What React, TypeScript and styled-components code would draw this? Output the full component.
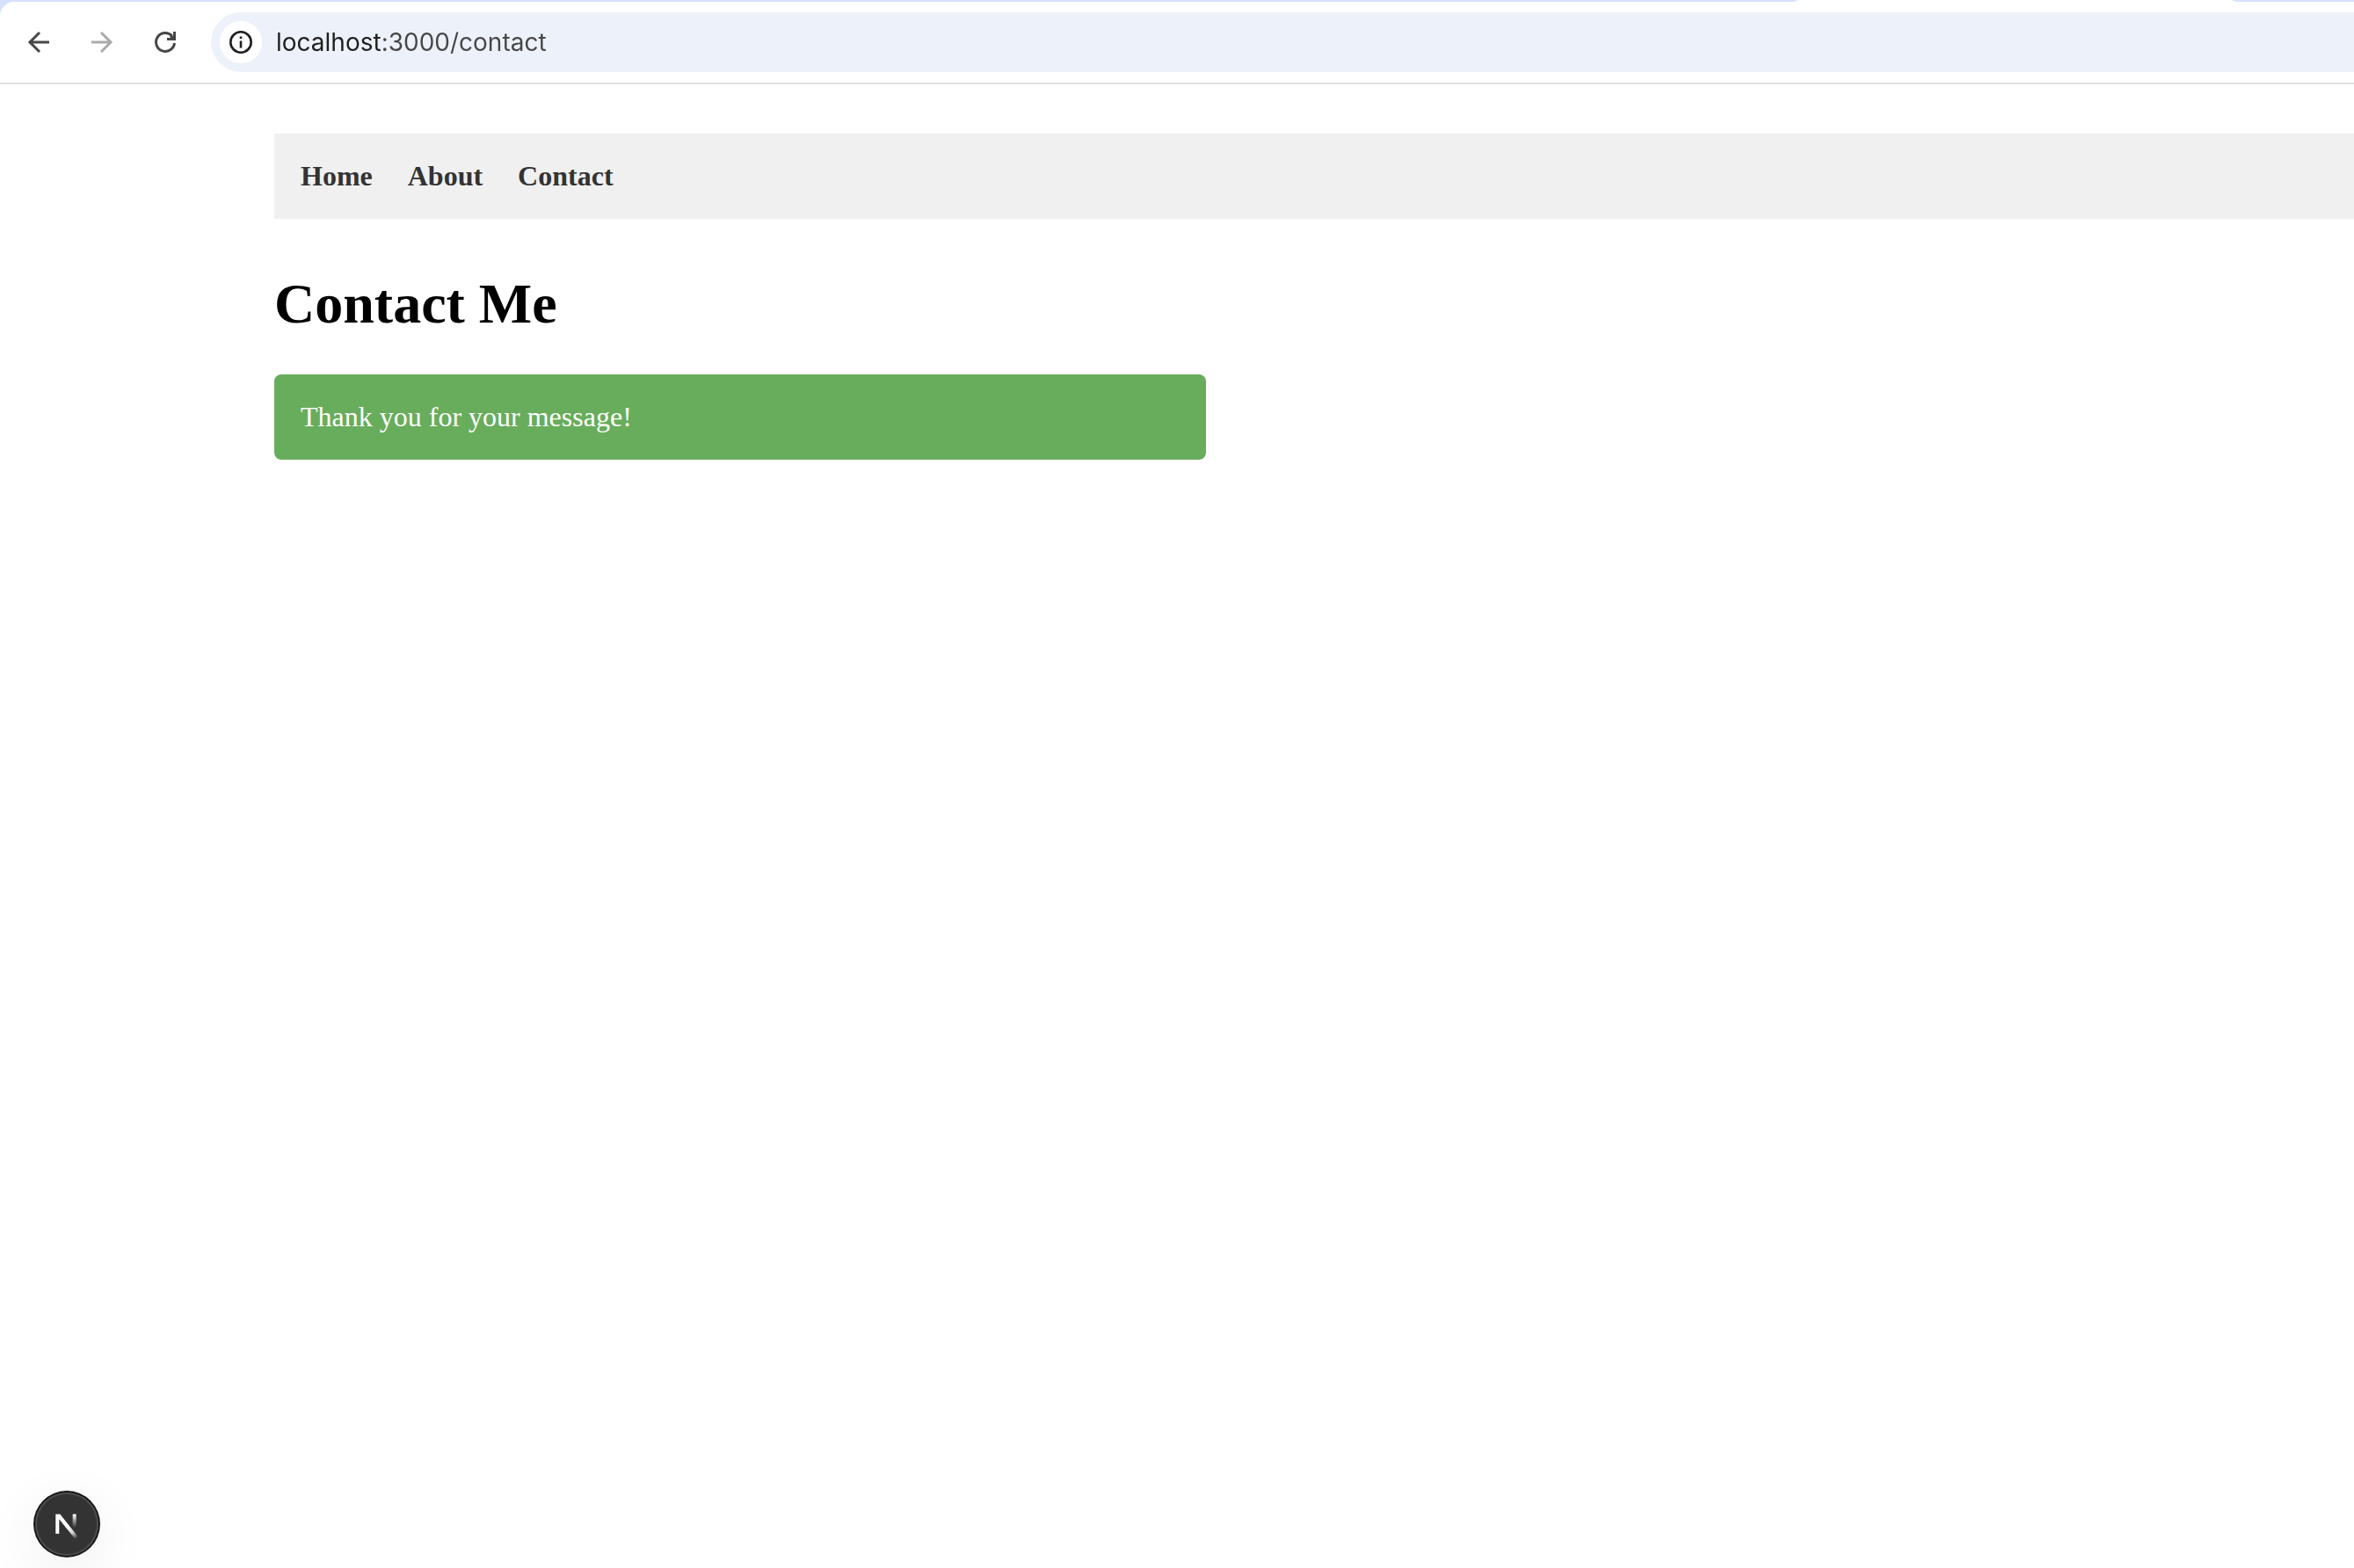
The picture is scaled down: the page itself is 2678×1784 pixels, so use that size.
import React from "react";
import styled, { createGlobalStyle } from "styled-components";

const GlobalStyle = createGlobalStyle`
  *, *::before, *::after {
    box-sizing: border-box;
  }
  body {
    margin: 0;
    background: #ffffff;
    color: #000000;
    font-family: "Liberation Serif", "Times New Roman", serif;
    font-size: 32px;
    line-height: 37px;
  }
`;

const Screen = styled.div`
  display: flex;
  flex-direction: column;
  min-height: 100vh;
  overflow-x: hidden;
`;

const Chrome = styled.header`
  background: #d6e2fb;
`;

const TabStrip = styled.div`
  display: flex;
  justify-content: flex-end;
  height: 2px;
  padding-right: 134px;
  overflow: hidden;
`;

const ActiveTab = styled.div`
  width: 504px;
  height: 2px;
  background: #ffffff;
  clip-path: polygon(6px 0, calc(100% - 6px) 0, 100% 100%, 0 100%);
`;

const Toolbar = styled.div`
  display: flex;
  align-items: center;
  padding: 12px 0 12px 16px;
  background: #ffffff;
  border-bottom: 2px solid #e1e1e1;
  border-top-left-radius: 16px;
`;

const NavButtons = styled.div`
  display: flex;
  gap: 16px;
  margin-right: 24px;
`;

const ToolButton = styled.button`
  display: grid;
  place-items: center;
  width: 56px;
  height: 56px;
  padding: 0;
  border: 0;
  border-radius: 50%;
  background: transparent;
  color: #474747;

  &:disabled {
    color: #ababab;
  }
`;

const AddressBar = styled.div`
  display: flex;
  flex: 1;
  align-items: center;
  gap: 16px;
  height: 68px;
  padding-left: 10px;
  background: #edf2fa;
  border-radius: 34px 0 0 34px;
`;

const SiteInfoButton = styled.button`
  display: grid;
  place-items: center;
  width: 48px;
  height: 48px;
  padding: 0;
  border: 0;
  border-radius: 50%;
  background: #ffffff;
  color: #1f1f1f;
`;

const AddressInput = styled.input`
  flex: 1;
  min-width: 0;
  height: 40px;
  padding: 0;
  border: 0;
  outline: 0;
  background: linear-gradient(to right, #1f1f1f 120px, #474747 120px);
  background-clip: text;
  -webkit-background-clip: text;
  -webkit-text-fill-color: transparent;
  font-family: Inter, "Liberation Sans", sans-serif;
  font-size: 28px;
  line-height: 40px;
`;

const Page = styled.div`
  padding: 56px 0 0 312px;
`;

const SiteNav = styled.nav`
  display: flex;
  gap: 40px;
  margin-bottom: 60px;
  padding: 30px;
  background: #f0f0f0;
`;

const NavLink = styled.a`
  color: #333333;
  font-weight: 700;
  text-decoration: none;
`;

const Title = styled.h1`
  margin: 0 0 43px;
  font-size: 64px;
  line-height: 74px;
`;

const Alert = styled.div`
  max-width: 1060px;
  padding: 30px;
  border-radius: 8px;
  background: #68ad5c;
  color: #ffffff;
`;

const DevButton = styled.button`
  position: fixed;
  left: 40px;
  bottom: 14px;
  display: grid;
  place-items: center;
  width: 72px;
  height: 72px;
  padding: 0;
  border: 0;
  border-radius: 50%;
  background: #333333;
  box-shadow:
    0 0 0 2px #171717,
    inset 0 0 0 2px #4b4b4b,
    0 16px 64px rgba(0, 0, 0, 0.08);
`;

const ArrowIcon = ({ forward = false }: { forward?: boolean }) => (
  <svg width="40" height="40" viewBox="0 0 40 40" fill="none" aria-hidden="true">
    <path
      d={forward ? "M8 20H29M19 9l11 11-11 11" : "M32 20H11M21 9L10 20l11 11"}
      stroke="currentColor"
      strokeWidth="3"
    />
  </svg>
);

const ReloadIcon = () => (
  <svg width="40" height="40" viewBox="0 0 40 40" fill="none" aria-hidden="true">
    <path d="M30.5 21a10.5 10.5 0 1 1-3-8.5" stroke="currentColor" strokeWidth="3" />
    <path d="M32 8v10H22v-3h4l-1-2 2-2 2 2V8z" fill="currentColor" />
  </svg>
);

const InfoIcon = () => (
  <svg width="28" height="28" viewBox="0 0 28 28" fill="none" aria-hidden="true">
    <circle cx="14" cy="14" r="11.7" stroke="currentColor" strokeWidth="2.6" />
    <path d="M14 12.5v8M14 7.500v2.600" stroke="currentColor" strokeWidth="2.6" />
  </svg>
);

const NextLogo = () => (
  <svg width="72" height="72" viewBox="0 0 72 72" fill="none" aria-hidden="true">
    <defs>
      <linearGradient id="diagonal" x1="38" y1="39" x2="48" y2="52" gradientUnits="userSpaceOnUse">
        <stop stopColor="#fff" />
        <stop offset="0.5" stopColor="#fff" stopOpacity="0.75" />
        <stop offset="1" stopColor="#fff" stopOpacity="0" />
      </linearGradient>
      <linearGradient id="stem" x1="45" y1="25" x2="45" y2="40" gradientUnits="userSpaceOnUse">
        <stop stopColor="#fff" />
        <stop offset="1" stopColor="#fff" stopOpacity="0" />
      </linearGradient>
    </defs>
    <path d="M23.300 47V24.700h5L48.500 50l-3 3L27.300 30.500V47z" fill="url(#diagonal)" />
    <path d="M42.700 24.700h4V41h-4z" fill="url(#stem)" />
  </svg>
);

const links = [
  { label: "Home", href: "/" },
  { label: "About", href: "/about" },
  { label: "Contact", href: "/contact" },
];

export default function App() {
  return (
    <Screen>
      <GlobalStyle />
      <Chrome>
        <TabStrip>
          <ActiveTab />
        </TabStrip>
        <Toolbar>
          <NavButtons>
            <ToolButton type="button" aria-label="Back">
              <ArrowIcon />
            </ToolButton>
            <ToolButton type="button" aria-label="Forward" disabled>
              <ArrowIcon forward />
            </ToolButton>
            <ToolButton type="button" aria-label="Reload">
              <ReloadIcon />
            </ToolButton>
          </NavButtons>
          <AddressBar>
            <SiteInfoButton type="button" aria-label="View site information">
              <InfoIcon />
            </SiteInfoButton>
            <AddressInput
              type="text"
              aria-label="Address"
              defaultValue="localhost:3000/contact"
              spellCheck={false}
            />
          </AddressBar>
        </Toolbar>
      </Chrome>
      <Page>
        <SiteNav>
          {links.map((link) => (
            <NavLink key={link.href} href={link.href}>
              {link.label}
            </NavLink>
          ))}
        </SiteNav>
        <main>
          <Title>Contact Me</Title>
          <Alert role="status">Thank you for your message!</Alert>
        </main>
      </Page>
      <DevButton type="button" aria-label="Open Next.js Dev Tools">
        <NextLogo />
      </DevButton>
    </Screen>
  );
}
